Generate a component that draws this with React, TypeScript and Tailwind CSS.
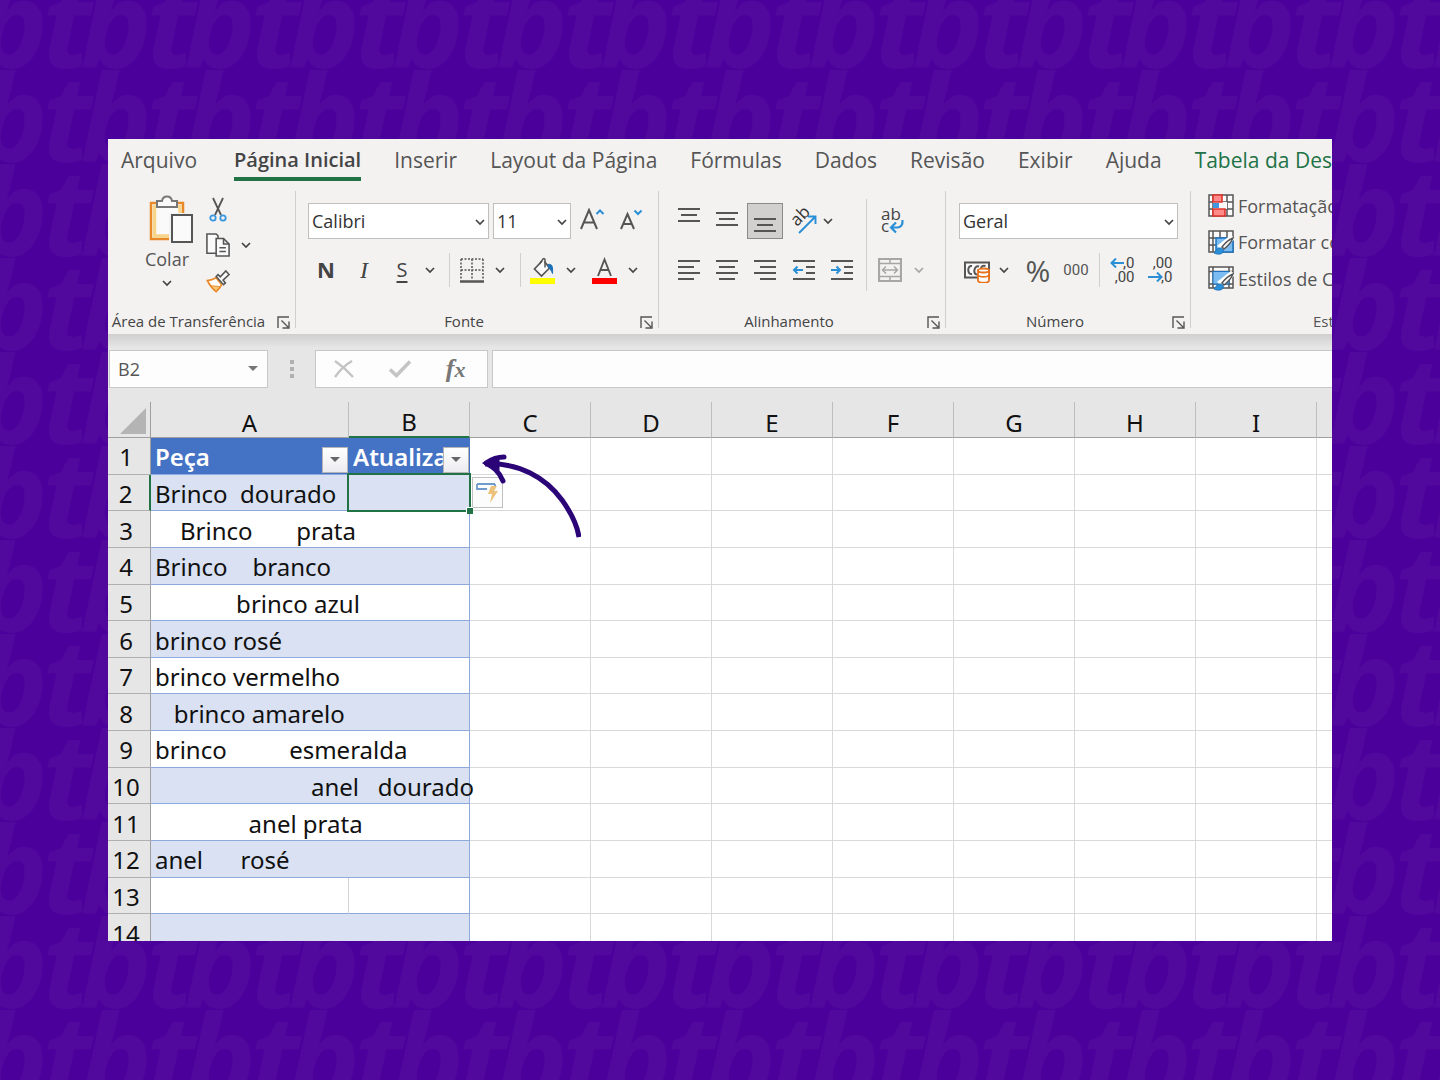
import type { ReactNode } from 'react'
import clsx from 'clsx'

const tabs = ['Arquivo', 'Página Inicial', 'Inserir', 'Layout da Página', 'Fórmulas', 'Dados', 'Revisão', 'Exibir', 'Ajuda', 'Tabela da Design']
const columns = ['A', 'B', 'C', 'D', 'E', 'F', 'G', 'H', 'I', 'J']

// the spaces are part of the cell values
const rows = [
  'Brinco  dourado',
  '    Brinco       prata',
  'Brinco    branco',
  '             brinco azul',
  'brinco rosé',
  'brinco vermelho',
  '   brinco amarelo',
  'brinco          esmeralda',
  '                         anel   dourado',
  '               anel prata',
  'anel      rosé',
  '',
  '',
]

const Chevron = ({ className = 'text-[#444]' }: { className?: string }) => (
  <svg width="10" height="8" viewBox="0 0 10 8" className={className} fill="none" stroke="currentColor" strokeWidth="1.700">
    <path d="M1 2l4 4 4-4" />
  </svg>
)

const Divider = ({ className }: { className?: string }) => <div className={clsx('w-px shrink-0 bg-[#d0cfce]', className)} />

function Tool({ label, className, children }: { label: string; className?: string; children: ReactNode }) {
  return (
    <button aria-label={label} className={clsx('flex h-9 shrink-0 items-center justify-center', className)}>
      {children}
    </button>
  )
}

function Combo({ label, value, className }: { label: string; value: string; className: string }) {
  return (
    <div className={clsx('relative h-9', className)}>
      <select aria-label={label} className="h-full w-full appearance-none border border-[#c0bfbe] bg-white pl-[3px] text-lg text-[#333]">
        <option>{value}</option>
      </select>
      <span className="pointer-events-none absolute top-[15px] right-1">
        <Chevron />
      </span>
    </div>
  )
}

function Group({ title, className, children }: { title: string; className: string; children: ReactNode }) {
  return (
    <>
      <section className={clsx('flex h-[149px] shrink-0 flex-col', className)}>
        {children}
        <div className="mt-auto flex h-6 items-center gap-2 pr-[5px] text-[15px] text-[#444]">
          <h2 className="flex min-w-0 flex-1 justify-center pb-0.5 whitespace-nowrap">{title}</h2>
          <button aria-label={'Opções de ' + title}>
            <svg width="13" height="13" viewBox="0 0 13 13" fill="none" stroke="#555" strokeWidth="1.4">
              <path d="M1 12V1h11M4.500 4.500L11 11M12 5.500V12H5.500" />
            </svg>
          </button>
        </div>
      </section>
      <Divider className="mt-1.5 h-[137px] bg-[#b5b4b3]" />
    </>
  )
}

/* horizontal strokes: [x1, x2, y] */
function Lines({ lines, children }: { lines: number[][]; children?: ReactNode }) {
  return (
    <svg width="24" height="24" viewBox="0 0 24 24" fill="none" stroke="#555" strokeWidth="2">
      {lines.map(([a, b, y]) => (
        <path key={y + '-' + a} d={`M${a} ${y}H${b}`} />
      ))}
      {children}
    </svg>
  )
}

const PasteIcon = () => (
  <svg width="44" height="48" viewBox="0 0 44 48" fill="none">
    <path d="M2 8h32v36H2z" fill="#fafafa" stroke="#e8892b" strokeWidth="2.500" />
    <path d="M5.500 10v31H20M31 10v8" stroke="#f7d58b" strokeWidth="3.500" />
    <path d="M8 12V6h5c1-6 9-6 10 0h5v6z" fill="#fafafa" stroke="#777" strokeWidth="2" />
    <path d="M20 18h24v30H20z" fill="#f3f2f1" />
    <path d="M23 20h20v27H23z" fill="#fafafa" stroke="#555" strokeWidth="2" />
  </svg>
)

const CutIcon = () => (
  <svg width="18" height="25" viewBox="0 0 18 25" fill="none">
    <path d="M4 1l8 17M14 1L6 18" stroke="#555" strokeWidth="1.800" />
    <circle cx="4" cy="21" r="2.700" stroke="#3a96dd" strokeWidth="1.800" />
    <circle cx="14" cy="21" r="2.700" stroke="#3a96dd" strokeWidth="1.800" />
  </svg>
)

const CopyIcon = () => (
  <svg width="26" height="26" viewBox="0 0 26 26" fill="#fafafa" stroke="#555" strokeWidth="1.700">
    <path d="M1 1h10l2 2v19H1z" />
    <path d="M11 6h8l6 6v13H11z" />
    <path d="M19 6v6h6M14.500 16h7M14.500 20h7" fill="none" />
  </svg>
)

const BrushIcon = () => (
  <svg width="26" height="25" viewBox="0 0 26 25" fill="none">
    <path d="M1.500 11.500c4-.3 7-1.500 9.500-3l6 7.500c-1.500 3-3.500 5.500-6 7.500-3-2.500-7-6.500-9.500-12z" fill="#fff" stroke="#e8892b" strokeWidth="1.800" />
    <path d="M5 17l10 1-4 5z" fill="#f7c873" stroke="#e8892b" />
    <path d="M11 7l8 9 2-2-2.500-3L25 5l-3.500-4-6 6.500L13 5z" fill="#fafafa" stroke="#555" strokeWidth="1.700" />
  </svg>
)

const BordersIcon = () => (
  <svg width="24" height="25" viewBox="0 0 24 25" fill="none" stroke="#555">
    <path d="M1 1h22M1 12h22" strokeWidth="1.500" strokeDasharray="2 1.500" />
    <path d="M1 1v21M12 1v21M23 1v21" strokeWidth="1.500" strokeDasharray="2 1.500" />
    <path d="M0 23.500h24" strokeWidth="2.500" />
  </svg>
)

const FillIcon = () => (
  <svg width="26" height="27" viewBox="0 0 26 27" fill="none">
    <path d="M12 4L4.500 12l7 7 8-8-5-6.500" fill="#fafafa" stroke="#555" strokeWidth="1.700" />
    <path d="M9.500 7l3.500-5c1-1 2.500 0 2 1.500v7" stroke="#555" strokeWidth="1.500" />
    <path d="M18 7.500c4-1 5 2 4.500 9-1-3-3-5-4-6z" fill="#1f6fb8" stroke="#1f6fb8" />
    <path d="M0 21h25v6H0z" fill="#ff0" />
  </svg>
)

const FontColorIcon = () => (
  <svg width="26" height="27" viewBox="0 0 26 27" fill="none">
    <path d="M6 19l6.500-16.500L19 19M8.500 13h8" stroke="#555" strokeWidth="1.900" />
    <path d="M0 21h25v6H0z" fill="red" />
  </svg>
)

const OrientationIcon = () => (
  <svg width="27" height="27" viewBox="0 0 27 27" fill="none" className="overflow-visible">
    <text x="7" y="19" fontSize="17" fill="#333" transform="rotate(-45 7 19)">ab</text>
    <path d="M9 25L25 9M18 8.500h7.500V16" stroke="#2b8fd6" strokeWidth="1.900" />
  </svg>
)

const WrapIcon = () => (
  <svg width="24" height="26" viewBox="0 0 24 26" fill="none" className="overflow-visible">
    <text x="1" y="12" fontSize="17" fill="#444">ab</text>
    <text x="1" y="24" fontSize="17" fill="#444">c</text>
    <path d="M22.500 12c.5 5-2 7.500-5 7.500H11M16 14.500l-5 5 5 5" stroke="#2b8fd6" strokeWidth="2.200" />
  </svg>
)

const MergeIcon = () => (
  <svg width="24" height="24" viewBox="0 0 24 24" fill="none" stroke="#a6a6a6">
    <path d="M1 1h22v22H1z" strokeWidth="2.200" />
    <path d="M1 5.500h22M1 18.500h22M12 1v4.500M12 18.500V23" strokeWidth="1.500" />
    <path d="M5 12h14M8 8.500L4.500 12 8 15.500M16 8.500l3.500 3.500-3.500 3.500" strokeWidth="1.500" />
  </svg>
)

const CurrencyIcon = () => (
  <svg width="27" height="22" viewBox="0 0 27 22" fill="none">
    <path d="M1 1.500h24v15H1z" fill="#fafafa" stroke="#555" strokeWidth="2" />
    <path d="M8 5C3 4 3 14 8 13M15 5.500c-5-2-6.500 8-2 8M17 8c0-3 2-3.500 4.500-3" stroke="#555" strokeWidth="2" />
    <path d="M14 9.500v10c0 3 11 3 11 0v-10z" fill="#fff" stroke="#e8731c" strokeWidth="1.800" />
    <ellipse cx="19.500" cy="9.500" rx="5.500" ry="2" fill="#fff" stroke="#e8731c" strokeWidth="1.800" />
    <path d="M14 14c1 2.500 10 2.500 11 0" stroke="#e8731c" strokeWidth="1.800" />
  </svg>
)

function DecimalIcon({ more }: { more: boolean }) {
  return (
    <span className="relative flex h-7 w-[25px] flex-col items-end font-['Roboto',sans-serif] text-[15px] leading-[14px] text-[#444]">
      <span>{more ? ',0' : ',00'}</span>
      <span>{more ? ',00' : ',0'}</span>
      <svg width="15" height="10" viewBox="0 0 15 10" fill="none" stroke="#2b8fd6" strokeWidth="2" className={clsx('absolute left-0', more ? 'top-0.5' : 'top-4')}>
        <path d={more ? 'M14 5H1.500M6 .5L1.500 5 6 9.500' : 'M0 5h13.500M9 .5L13.500 5 9 9.500'} />
      </svg>
    </span>
  )
}

const GridBase = () => <path d="M1 1h24v21H1zM1 8h24M1 15h24M5 1v21M12 1v21M19 1v21" fill="#fafafa" stroke="#555" strokeWidth="1.500" />

const SmallBrush = () => (
  <>
    <path d="M25 7L11 18" stroke="#fff" strokeWidth="6" />
    <path d="M25 8c-5 2-8 5-11 9l2 2c4-3 7-6 9-11z" fill="#fafafa" stroke="#555" strokeWidth="1.500" />
    <path d="M6 23c2-1 2-5 6-5s5 5 0 6c-2 .3-4 0-6-1z" fill="#2b8fd6" stroke="#1a73c0" />
  </>
)

const ConditionalIcon = () => (
  <svg width="26" height="24" viewBox="0 0 26 24" fill="none" className="shrink-0">
    <GridBase />
    <path d="M5 8h14v7H5z" fill="#fafafa" />
    <path d="M5 1h9v7H5zM5 15h12v7H5z" fill="#ff8a8a" stroke="#e0322b" strokeWidth="1.600" />
    <path d="M5 9h6v5H5z" fill="#3f97e0" />
  </svg>
)

const TableFormatIcon = () => (
  <svg width="26" height="25" viewBox="0 0 26 25" fill="none" className="shrink-0">
    <GridBase />
    <path d="M8 8h17v14H8z" fill="#7dbcf0" stroke="#1a73c0" strokeWidth="1.500" />
    <SmallBrush />
  </svg>
)

const CellStyleIcon = () => (
  <svg width="26" height="25" viewBox="0 0 26 25" fill="none" className="shrink-0">
    <path d="M1 1h24v21H1zM5 1v21M1 5.500h24M1 18h24M21 1v21" fill="#fafafa" stroke="#555" strokeWidth="1.500" />
    <path d="M5 5.500h16V18H5z" fill="#7dbcf0" stroke="#1a73c0" />
    <SmallBrush />
  </svg>
)

function Ribbon() {
  return (
    <div className="flex h-[149px]">
      <Group title="Área de Transferência" className="w-[187px]">
        <div className="flex pt-1.5 pl-5">
          <button className="flex w-[78px] flex-col items-center pt-1 text-lg leading-6 text-[#555]">
            <span className="pl-2"><PasteIcon /></span>
            <span className="mt-1">Colar</span>
            <span className="mt-2"><Chevron /></span>
          </button>
          <div>
            <Tool label="Recortar" className="w-6"><CutIcon /></Tool>
            <div className="flex">
              <Tool label="Copiar" className="w-6"><CopyIcon /></Tool>
              <Tool label="Opções de cópia" className="w-8"><Chevron /></Tool>
            </div>
            <Tool label="Pincel de formatação" className="w-6"><BrushIcon /></Tool>
          </div>
        </div>
      </Group>

      <Group title="Fonte" className="w-[362px]">
        <div className="flex items-center pt-[18px] pl-3">
          <Combo label="Fonte" value="Calibri" className="w-[181px]" />
          <Combo label="Tamanho" value="11" className="ml-1 w-[78px]" />
          <Tool label="Aumentar fonte" className="ml-2 w-[26px] pb-1">
            <svg width="25" height="22" viewBox="0 0 25 22" fill="none">
              <path d="M1 21L9 2l8 19M4 14.500h10" stroke="#555" strokeWidth="2" />
              <path d="M16.500 6L20 2.500 23.500 6" stroke="#2b8fd6" strokeWidth="2" />
            </svg>
          </Tool>
          <Tool label="Diminuir fonte" className="ml-[14px] w-6 pb-1">
            <svg width="23" height="22" viewBox="0 0 23 22" fill="none">
              <path d="M1 21L7.500 6 14 21M3.500 16h8" stroke="#555" strokeWidth="2" />
              <path d="M14.500 2.500L18 6l3.500-3.500" stroke="#2b8fd6" strokeWidth="2" />
            </svg>
          </Tool>
        </div>
        <div className="mt-[13px] flex items-center pl-3 text-xl text-[#444]">
          <Tool label="Negrito" className="w-9 pb-0.5 text-[22px]"><b>N</b></Tool>
          <Tool label="Itálico" className="w-10"><i className="font-['Liberation_Serif',serif] text-2xl">I</i></Tool>
          <Tool label="Sublinhado" className="w-9"><span className="underline decoration-2 underline-offset-4">S</span></Tool>
          <Tool label="Opções de sublinhado" className="w-5"><Chevron /></Tool>
          <Divider className="mr-[10px] ml-[9px] h-[34px]" />
          <Tool label="Bordas" className="w-6"><BordersIcon /></Tool>
          <Tool label="Opções de bordas" className="w-8"><Chevron /></Tool>
          <Divider className="mr-[9px] ml-1 h-[34px]" />
          <Tool label="Cor de preenchimento" className="w-[26px]"><FillIcon /></Tool>
          <Tool label="Opções de preenchimento" className="w-[30px]"><Chevron /></Tool>
          <Tool label="Cor da fonte" className="ml-1.5 w-[26px]"><FontColorIcon /></Tool>
          <Tool label="Opções de cor" className="w-[30px]"><Chevron /></Tool>
        </div>
      </Group>

      <Group title="Alinhamento" className="w-[286px]">
        <div className="flex pl-[11px]">
          <div className="pt-[18px]">
            <div className="flex">
              <Tool label="Alinhar em cima" className="w-[38px] pb-1"><Lines lines={[[1, 23, 2], [4, 20, 8], [1, 23, 14]]} /></Tool>
              <Tool label="Alinhar no meio" className="w-[38px] pb-1"><Lines lines={[[1, 23, 6], [4, 20, 12], [1, 23, 18]]} /></Tool>
              <Tool label="Alinhar embaixo" className="mx-px w-9 border border-[#8a8a8a] bg-[#d2d0ce]"><Lines lines={[[1, 23, 10], [4, 20, 16], [1, 23, 22]]} /></Tool>
              <Tool label="Orientação" className="w-[38px]"><OrientationIcon /></Tool>
              <Tool label="Opções de orientação" className="w-3"><Chevron /></Tool>
            </div>
            <div className="mt-[13px] flex">
              <Tool label="Alinhar à esquerda" className="w-[38px]"><Lines lines={[[1, 23, 3], [1, 17, 9], [1, 23, 15], [1, 17, 21]]} /></Tool>
              <Tool label="Centralizar" className="w-[38px]"><Lines lines={[[1, 23, 3], [4, 20, 9], [1, 23, 15], [4, 20, 21]]} /></Tool>
              <Tool label="Alinhar à direita" className="w-[38px]"><Lines lines={[[1, 23, 3], [7, 23, 9], [1, 23, 15], [7, 23, 21]]} /></Tool>
              <Tool label="Diminuir recuo" className="w-[38px] pl-px">
                <Lines lines={[[1, 23, 3], [14, 23, 9], [14, 23, 15], [1, 23, 21]]}><path d="M11 12H2M5.500 8.500L2 12l3.500 3.500" stroke="#2b8fd6" /></Lines>
              </Tool>
              <Tool label="Aumentar recuo" className="w-[38px] pl-px">
                <Lines lines={[[1, 23, 3], [14, 23, 9], [14, 23, 15], [1, 23, 21]]}><path d="M1 12h9M6.500 8.500L10 12l-3.500 3.500" stroke="#2b8fd6" /></Lines>
              </Tool>
            </div>
          </div>
          <Divider className="mt-[14px] ml-1.5 h-[92px]" />
          <div className="pt-[18px]">
            <Tool label="Quebrar texto" className="w-[50px]"><WrapIcon /></Tool>
            <div className="mt-[13px] flex">
              <Tool label="Mesclar e centralizar" className="w-[46px]"><MergeIcon /></Tool>
              <Tool label="Opções de mesclagem" className="w-3"><Chevron className="text-[#a6a6a6]" /></Tool>
            </div>
          </div>
        </div>
      </Group>

      <Group title="Número" className="w-[244px]">
        <div className="pt-[18px] pl-[13px]">
          <Combo label="Formato de número" value="Geral" className="w-[219px]" />
          <div className="mt-[13px] flex items-center text-[#555]">
            <Tool label="Formato de contabilização" className="w-9 pt-1"><CurrencyIcon /></Tool>
            <Tool label="Opções de moeda" className="w-[18px]"><Chevron /></Tool>
            <Tool label="Porcentagem" className="w-[50px] text-[30px]">%</Tool>
            <Tool label="Separador de milhares" className="w-[26px] font-['Roboto',sans-serif] text-[15px]">000</Tool>
            <Divider className="mr-[3px] ml-[10px] h-[34px]" />
            <Tool label="Aumentar casas decimais" className="w-[38px]"><DecimalIcon more /></Tool>
            <Tool label="Diminuir casas decimais" className="w-[38px]"><DecimalIcon more={false} /></Tool>
          </div>
        </div>
      </Group>

      <section className="flex min-w-0 flex-1 flex-col overflow-hidden pt-0.5 pl-[17px] text-lg whitespace-nowrap text-[#555]">
        <button className="flex h-[37px] items-center gap-1"><ConditionalIcon /> Formatação Condicional</button>
        <button className="flex h-9 items-center gap-1"><TableFormatIcon /> Formatar como Tabela</button>
        <button className="flex h-[37px] items-center gap-1"><CellStyleIcon /> Estilos de Célula</button>
        <h2 className="mt-auto h-6 pl-[105px] text-[15px] leading-[22px]">Estilos</h2>
      </section>
    </div>
  )
}

function FormulaBar() {
  return (
    <div className="bg-linear-to-b from-[#cfcfcf] to-[#e6e6e6] to-20% pt-4 pb-[14px]">
      <div className="flex h-[38px] items-center pl-px">
        <div className="relative h-full w-[159px]">
          <input aria-label="Caixa de nome" defaultValue="B2" className="h-full w-full border border-[#c8c8c8] bg-[#fdfdfd] pl-2 text-lg text-[#555]" />
          <span className="pointer-events-none absolute top-4 right-2.5 border-x-5 border-t-5 border-x-transparent border-t-[#777]" />
        </div>
        <div className="flex w-[47px] flex-col items-center gap-[3px]">
          <i className="size-1 bg-[#b0b0b0]" />
          <i className="size-1 bg-[#b0b0b0]" />
          <i className="size-1 bg-[#b0b0b0]" />
        </div>
        <div className="flex h-full w-[173px] items-center justify-around border border-[#c8c8c8] bg-[#fdfdfd]">
          <button aria-label="Cancelar">
            <svg width="20" height="18" viewBox="0 0 20 18" fill="none" stroke="#c4c4c4" strokeWidth="2.400"><path d="M1 1c6 4 12 9 18 16M18 1C11 5 6 10 1 17" /></svg>
          </button>
          <button aria-label="Inserir">
            <svg width="22" height="18" viewBox="0 0 22 18" fill="none" stroke="#c4c4c4" strokeWidth="3.500"><path d="M1 9.500l6.500 6L21 1.500" /></svg>
          </button>
          <button aria-label="Inserir função" className="pr-1 font-['Liberation_Serif',serif] text-[26px] leading-8 font-bold text-[#777] italic">
            f<span className="text-[22px]">x</span>
          </button>
        </div>
        <input aria-label="Barra de fórmulas" className="ml-1 h-full min-w-0 flex-1 border border-r-0 border-[#c8c8c8] bg-[#fdfdfd] px-2" />
      </div>
    </div>
  )
}

const FilterButton = ({ label }: { label: string }) => (
  <button aria-label={'Filtrar ' + label} className="absolute right-px bottom-px flex size-[26px] items-center justify-center border border-[#b5b5b5] bg-linear-to-b from-white to-[#ececf0]">
    <span className="border-x-5 border-t-5 border-x-transparent border-t-[#666]" />
  </button>
)

function Sheet() {
  return (
    <div className="relative min-h-0 flex-1 overflow-hidden bg-white">
      <table className="h-[549px] w-[1330px] table-fixed border-separate border-spacing-0 font-['Noto_Sans',sans-serif] text-2xl text-[#111]">
        <colgroup>
          <col className="w-[43px]" />
          <col className="w-[198px]" />
          {columns.slice(1).map((c) => <col key={c} className="w-[121px]" />)}
        </colgroup>
        <thead>
          <tr className="h-9 bg-[#e6e6e6]">
            <th className="border-r border-b border-[#9f9f9f] p-0">
              <svg width="27" height="27" viewBox="0 0 27 27" className="mt-1 ml-3"><path d="M26 0v26H0z" fill="#b4b4b4" /></svg>
            </th>
            {columns.map((c) => (
              <th key={c} scope="col" className={clsx('border-r border-r-[#bdbdbd] p-0 leading-7 font-normal', c === 'B' ? 'border-b-2 border-b-[#217346] pt-1.5' : 'border-b border-b-[#9f9f9f] pt-1.5')}>
                {c}
              </th>
            ))}
          </tr>
        </thead>
        <tbody>
          <tr>
            <RowNumber n={1} />
            <th scope="col" className="relative border-b border-[#8ea9db] bg-[#4472c4] p-0 pt-[3px] pl-1 text-left leading-8 font-semibold text-white">
              Peça
              <FilterButton label="Peça" />
            </th>
            <th scope="col" className="relative border-b border-[#8ea9db] bg-[#4472c4] p-0 pt-[3px] pl-1 text-left leading-8 font-semibold text-white">
              Atualiza
              <FilterButton label="Atualiza" />
            </th>
            <BlankCells />
          </tr>
          {rows.map((text, i) => (
            <tr key={i}>
              <RowNumber n={i + 2} />
              <td className={clsx('border-b border-b-[#8ea9db] p-0 pt-[3px] pl-1 leading-8 whitespace-pre', i % 2 === 0 && 'bg-[#d9e1f2]', i === 11 && 'border-r border-r-[#d4d4d4]')}>
                {text}
              </td>
              <td className={clsx('border-r border-b border-[#8ea9db] p-0', i % 2 === 0 && 'bg-[#d9e1f2]', i === 0 && 'relative')}>
                {i === 0 && <Selection />}
              </td>
              <BlankCells />
            </tr>
          ))}
        </tbody>
      </table>
      <svg width="100" height="86" viewBox="0 0 100 86" className="absolute top-[51px] left-[373px]" fill="none" stroke="#2b0478" strokeLinecap="round">
        <path d="M4 11c34-2 61 14 77 36 10 14 15 24 17 37" strokeWidth="5" strokeLinecap="butt" />
        <path d="M23 4C16 4 11 6 5 10c7 4 13 8 17 18" strokeWidth="5" strokeLinejoin="round" />
        <path d="M2 10l16-6v13z" fill="#2b0478" />
      </svg>
    </div>
  )
}

const RowNumber = ({ n }: { n: number }) => (
  <th scope="row" className={clsx('border-b border-b-[#b0b0b0] bg-[#e6e6e6] p-0 pt-[3px] pr-1.5 text-center leading-8 font-normal', n === 2 ? 'border-r-2 border-r-[#217346]' : 'border-r border-r-[#9f9f9f]')}>
    {n}
  </th>
)

const BlankCells = () => (
  <>
    {columns.slice(2).map((c) => <td key={c} className="border-r border-b border-[#d9d9d9] p-0" />)}
  </>
)

const Selection = () => (
  <>
    <span className="absolute -inset-x-0.5 -inset-y-0.5 border-2 border-[#217346]" />
    <span className="absolute -right-1 -bottom-1 z-10 size-[7px] border-t border-l border-white bg-[#217346]" />
    <button aria-label="Opções de preenchimento automático" className="absolute top-0.5 left-[123px] flex size-[31px] items-center justify-center border border-[#c0c0c0] bg-[#fcfcfc]">
      <svg width="23" height="23" viewBox="0 0 23 23" fill="none">
        <path d="M1 3h18M1 3v5h10M19 3v2" stroke="#6f9ccc" strokeWidth="1.800" />
        <path d="M15 5h6l-3 5h4l-8 12 2-9h-4z" fill="#ecc27c" />
      </svg>
    </button>
  </>
)

const Backdrop = () => (
  <svg aria-hidden="true" className="absolute inset-0 size-full">
    <defs>
      <pattern id="bt" width="104" height="94" x="0" y="-25" patternUnits="userSpaceOnUse">
        <g fill="#51089d" fontFamily="Open Sans" fontWeight="700" fontStyle="italic" fontSize="121">
          <text x="-24" y="93">b</text>
          <text x="80" y="93">b</text>
          <text x="42" y="93">t</text>
          <text x="-62" y="93">t</text>
        </g>
      </pattern>
    </defs>
    <rect width="100%" height="100%" fill="url(#bt)" />
  </svg>
)

export default function App() {
  return (
    <div className="relative flex h-screen flex-col overflow-hidden bg-[#4b009b] px-[7.5%] py-[139px] font-['Open_Sans',sans-serif]">
      <Backdrop />
      <main className="relative flex min-h-0 flex-1 flex-col overflow-hidden bg-[#f3f2f1]">
        <nav className="flex h-[46px] items-start gap-[33px] pl-[13px] text-[21px] whitespace-nowrap text-[#555]">
          {tabs.map((tab, i) => (
            <button
              key={tab}
              className={clsx('h-[42px] shrink-0', i === 1 ? 'ml-1 border-b-4 border-[#217346] pt-1 text-xl font-semibold text-[#444]' : 'pt-0.5', i === 9 && 'text-[#217346]')}
            >
              {tab}
            </button>
          ))}
        </nav>
        <Ribbon />
        <FormulaBar />
        <Sheet />
      </main>
    </div>
  )
}
